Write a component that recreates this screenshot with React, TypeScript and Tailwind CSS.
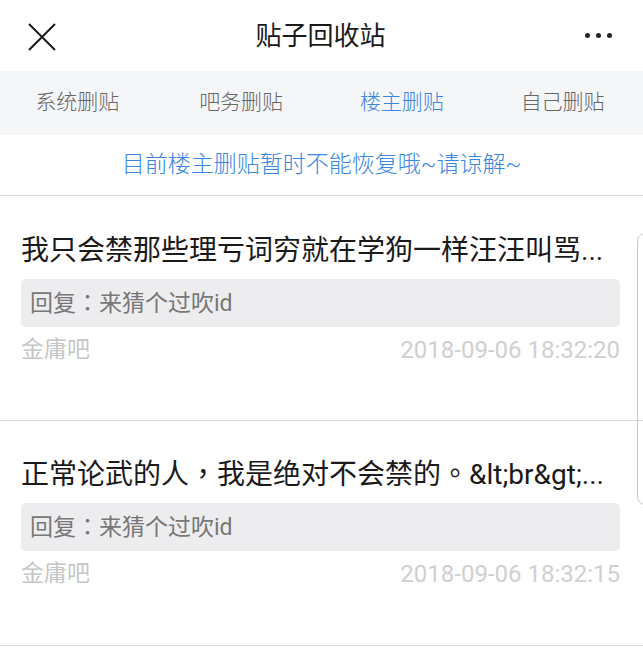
import React from 'react';

const TABS = ['系统删贴', '吧务删贴', '楼主删贴', '自己删贴'];
const ACTIVE_TAB = 2;

const POSTS = [
  {
    title: '我只会禁那些理亏词穷就在学狗一样汪汪叫骂...',
    reply: '回复：来猜个过吹id',
    forum: '金庸吧',
    time: '2018-09-06 18:32:20',
  },
  {
    title: '正常论武的人，我是绝对不会禁的。&lt;br&gt;...',
    reply: '回复：来猜个过吹id',
    forum: '金庸吧',
    time: '2018-09-06 18:32:15',
  },
];

// full-width punctuation sits in the middle of the cell in the screenshot (TC style)
function Punct({ text }: { text: string }) {
  return (
    <>
      {text.split(/([，。：])/).map((part, i) =>
        /^[，。：]$/.test(part) ? (
          <span key={i} style={{ fontFamily: "'Noto Sans CJK TC', sans-serif" }}>
            {part}
          </span>
        ) : (
          <React.Fragment key={i}>{part}</React.Fragment>
        )
      )}
    </>
  );
}

export default function App() {
  return (
    <main
      className="relative w-[643px] h-[655px] overflow-hidden bg-white"
      style={{ fontFamily: "Roboto, 'Noto Sans CJK SC', sans-serif" }}
    >
      {/* header */}
      <div className="h-[71px] flex items-center justify-between px-[28px]">
        <svg width="28" height="28" viewBox="0 0 28 28" className="mt-[2px]">
          <path d="M1 1 L27 27 M27 1 L1 27" stroke="#1a1a1a" strokeWidth="2" fill="none" />
        </svg>
        <h1 className="text-[26px] text-[#1a1a1a] leading-none">贴子回收站</h1>
        <div className="flex items-center gap-[6px] mr-[3px]">
          <span className="w-[5px] h-[5px] rounded-full bg-[#222]" />
          <span className="w-[5px] h-[5px] rounded-full bg-[#222]" />
          <span className="w-[5px] h-[5px] rounded-full bg-[#222]" />
        </div>
      </div>

      {/* tabs */}
      <div className="h-[64px] grid grid-cols-4 bg-[#f5f6f8]">
        {TABS.map((tab, i) => (
          <div
            key={tab}
            className={
              'flex items-center justify-center text-[21px] font-light ' +
              (i === ACTIVE_TAB ? 'text-[#3a86e0]' : 'text-[#666666]') +
              (i === 0 ? ' pr-[6px]' : '')
            }
          >
            {tab}
          </div>
        ))}
      </div>

      {/* notice */}
      <div className="h-[61px] flex items-center justify-center border-b border-[#d8d8d8] text-[23px] font-light text-[#3a86e0]">
        目前楼主删贴暂时不能恢复哦~请谅解~
      </div>

      {/* post list */}
      {POSTS.map((post, i) => (
        <div
          key={post.time}
          className={
            'h-[225px] border-b border-[#d8d8d8] pl-[21px] pr-[23px] ' +
            (i === 0 ? 'pt-[36px]' : 'pt-[32px]')
          }
        >
          <div className="text-[28px] leading-[38px] text-[#1a1a1a] whitespace-nowrap">
            <Punct text={post.title} />
          </div>
          <div className="mt-[9px] h-[48px] flex items-center rounded-[5px] bg-[#ededef] px-[9px] text-[23px] text-[#777777]">
            <span>
              <Punct text={post.reply} />
            </span>
          </div>
          <div className="mt-[8px] flex items-center justify-between text-[23px] leading-[30px] text-[#c6c6c6]">
            <span>{post.forum}</span>
            <span className="text-[24px] text-[#d0d0d0]">{post.time}</span>
          </div>
        </div>
      ))}

      {/* scroll indicator */}
      <div className="absolute right-[-10px] top-[233px] w-[16px] h-[272px] rounded-[8px] border border-[#c8c8c8]" />
    </main>
  );
}
